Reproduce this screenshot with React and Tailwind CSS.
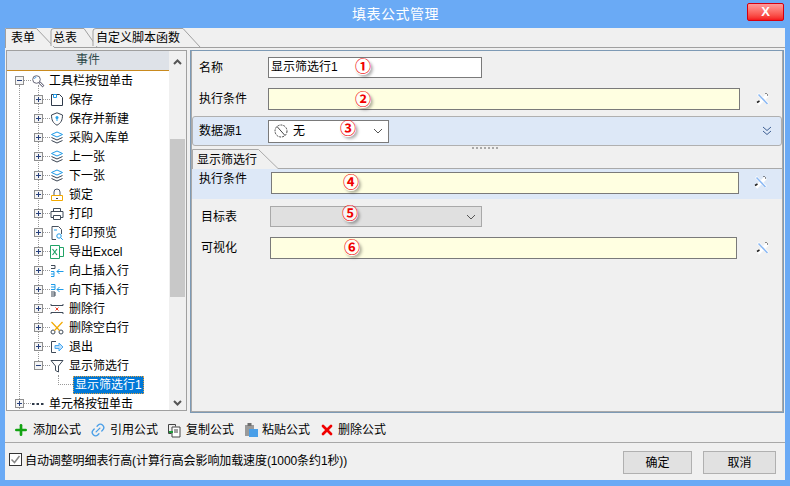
import { Plus, Link2, X } from 'lucide-react'

const FONT = "font-['Liberation_Sans','Noto_Sans_CJK_SC',sans-serif]"

const Stroke = ({ children, size = 14 }) => (
  <svg width={size} height={size} viewBox="0 0 14 14" fill="none" className="shrink-0">{children}</svg>
)

const icons = {
  search: (
    <Stroke>
      <circle cx="5.5" cy="5.5" r="3.8" stroke="#667" fill="#fff" />
      <path d="M3.5 5a2 2 0 0 1 2-2" stroke="#5aa7e8" />
      <path d="M8.500 8.500 12.500 12.500" stroke="#778" strokeWidth="2.500" />
      <path d="M9 9 12 12" stroke="#fff" />
    </Stroke>
  ),
  save: (
    <Stroke>
      <path d="M1.5 1.5h8l3 3v8h-11z" stroke="#2f3a4a" fill="#fff" />
      <path d="M3.5 1.5h3v3h-3z" stroke="#1e9be8" />
    </Stroke>
  ),
  shield: (
    <Stroke>
      <path d="M7 .8 12.5 3c0 5-1.5 8.2-5.5 10.2C3 11.200 1.500 8 1.500 3z" stroke="#3a4452" fill="#fff" />
      <circle cx="7" cy="5.500" r="1.500" fill="#28a3ea" />
      <path d="M7 6v3" stroke="#28a3ea" />
    </Stroke>
  ),
  layers: (
    <Stroke>
      <path d="M7 1 12.500 3.500 7 6 1.500 3.500z" stroke="#1e9be8" />
      <path d="M1.500 6.500 7 9l5.500-2.500" stroke="#3a4452" />
      <path d="M1.500 9.500 7 12l5.500-2.500" stroke="#3a4452" />
    </Stroke>
  ),
  lock: (
    <Stroke>
      <path d="M4 7V4a3 3 0 0 1 6 0v3" stroke="#4a5565" />
      <path d="M1.500 7.500h11v5h-11z" stroke="#f2a900" fill="#fff" />
      <path d="M6 10.500h2" stroke="#445" />
    </Stroke>
  ),
  print: (
    <Stroke>
      <path d="M3.500 4V1.500h7V4" stroke="#3f4a58" />
      <path d="M3 10.500H1V4.500h12v6h-2" stroke="#3f4a58" />
      <path d="M3.500 8.500h7v4h-7z" stroke="#3f4a58" fill="#fff" />
    </Stroke>
  ),
  preview: (
    <Stroke>
      <path d="M2 .500h6.500l3 3V8M6 13.500H2V.500" stroke="#46505e" />
      <circle cx="9" cy="10" r="2.200" stroke="#1e9be8" />
      <path d="M10.800 11.800 12.800 13.800" stroke="#1e9be8" />
      <path d="M4 4h3" stroke="#1e9be8" />
    </Stroke>
  ),
  excel: (
    <Stroke>
      <path d="M.500.500h9v13h-9z" stroke="#21a366" fill="#fff" />
      <path d="M9.500 2.500h4v9h-4" stroke="#21a366" />
      <path d="M2.500 4 7 10M7 4l-4.500 6" stroke="#21a366" strokeWidth="1.200" />
    </Stroke>
  ),
  rowUp: (
    <Stroke>
      <path d="M1 1.500h4v3M1 4.500h4" stroke="#3f4a58" />
      <path d="M1 7.500h3v5H1M1 10h3" stroke="#1e9be8" />
      <path d="M13.500 7.500H7M9.500 5 7 7.500 9.500 10" stroke="#1e9be8" />
    </Stroke>
  ),
  rowDown: (
    <Stroke>
      <path d="M1 1.500h4v5H1M1 4h4" stroke="#1e9be8" />
      <path d="M1 9h4v4H1M1 11h4" stroke="#3f4a58" />
      <path d="M13.500 6.500H7M9.500 4 7 6.500 9.500 9" stroke="#1e9be8" />
    </Stroke>
  ),
  delRow: (
    <Stroke>
      <path d="M1 2v1.500h12V2M1 12v-1.500h12V12" stroke="#3f4a58" />
      <path d="M5.500 5.500 8.500 8.500M8.500 5.500 5.500 8.500" stroke="#e8402a" />
    </Stroke>
  ),
  scissors: (
    <Stroke>
      <circle cx="3" cy="11" r="2" stroke="#3f4a58" />
      <circle cx="11" cy="11" r="2" stroke="#3f4a58" />
      <path d="M1.500 1 9.500 9.500M12.500 1 4.500 9.500" stroke="#f2a900" strokeWidth="1.200" />
    </Stroke>
  ),
  exit: (
    <Stroke>
      <path d="M6 1.500H1.500v11H6" stroke="#3f4a58" />
      <path d="M5 5.500h4V3l4 4-4 4V8.500H5z" stroke="#4aa8f0" fill="#bfe0fb" />
    </Stroke>
  ),
  funnel: (
    <Stroke>
      <path d="M1 1.500h12L8.500 7v6l-3-1.500V7z" stroke="#3f4a58" fill="#fff" />
    </Stroke>
  ),
  dots: (
    <Stroke>
      <path d="M1 7h2.500M5.500 7H8M10 7h2.500" stroke="#2f3a4a" strokeWidth="2" />
    </Stroke>
  ),
}

const tree = [
  { label: '保存', icon: 'save' },
  { label: '保存并新建', icon: 'shield' },
  { label: '采购入库单', icon: 'layers' },
  { label: '上一张', icon: 'layers' },
  { label: '下一张', icon: 'layers' },
  { label: '锁定', icon: 'lock' },
  { label: '打印', icon: 'print' },
  { label: '打印预览', icon: 'preview' },
  { label: '导出Excel', icon: 'excel' },
  { label: '向上插入行', icon: 'rowUp' },
  { label: '向下插入行', icon: 'rowDown' },
  { label: '删除行', icon: 'delRow' },
  { label: '删除空白行', icon: 'scissors' },
  { label: '退出', icon: 'exit' },
]

function Expander({ open }) {
  return (
    <span className="relative z-10 w-[9px] h-[9px] shrink-0 border border-[#8f8f8f] bg-[#f4f4f4] flex items-center justify-center">
      <span className="absolute w-[5px] h-px bg-[#27407c]" />
      {!open && <span className="absolute w-px h-[5px] bg-[#27407c]" />}
    </span>
  )
}

function Row({ level, open, icon, children }) {
  return (
    <div className={`flex items-center h-[19px] ${level === 0 ? 'pl-[8px]' : 'pl-[27px]'}`}>
      <Expander open={open} />
      <span className="w-[7px] border-t border-dotted border-[#999]" />
      <span className="w-[14px] flex justify-center">{icons[icon]}</span>
      <span className={`${level === 0 ? 'ml-[4px]' : 'ml-[5px]'} text-[12px] text-black whitespace-nowrap`}>{children}</span>
    </div>
  )
}

function Tab({ label, className, path }) {
  return (
    <div className={`relative ${className} pl-[6px] text-[12px] leading-[21px] text-black -mr-[8px]`}>
      <svg className="absolute inset-0 w-full h-full" fill="none">
        <path d={path} stroke="#a0a0a0" fill="#f0f0f0" />
      </svg>
      <span className="relative">{label}</span>
    </div>
  )
}

function Tools() {
  return (
    <svg width="16" height="16" viewBox="0 0 16 16" fill="none" className="shrink-0">
      <path d="M3 13.500 12.500 4" stroke="#fff" strokeWidth="3.500" />
      <path d="M3 3 13 13" stroke="#fff" strokeWidth="2.500" />
      <path d="M3.500 3.500 12.500 13" stroke="#8ab8f4" strokeWidth="1.500" />
      <path d="M2 11.500 4.500 10" stroke="#222" strokeWidth="1.500" />
      <path d="M10.500 2.500h1M12.500 3.500v1" stroke="#222" />
    </svg>
  )
}

function Chevron() {
  return (
    <svg width="10" height="6" viewBox="0 0 10 6" fill="none" className="shrink-0">
      <path d="M1 1 5 5l4-4" stroke="#555" />
    </svg>
  )
}

function Mark({ className, children }) {
  return (
    <span className={`absolute ${className} w-[16px] h-[16px] flex items-center justify-center text-[16px] font-bold leading-none text-[#f00000] bg-[#fff]/70 rounded-full [box-shadow:2px_2px_3px_rgba(0,0,0,0.3)]`}>
      {children}
    </span>
  )
}

function Field({ className }) {
  return <div className={`h-[22px] border border-[#7a7a7a] bg-[#ffffe1] ${className}`} />
}

export default function App() {
  return (
    <div className={`${FONT} w-[790px] h-[486px] bg-[#6aaaf5] flex flex-col overflow-hidden`}>
      <div className="h-[28px] shrink-0 flex items-center justify-center relative text-white text-[14px] tracking-[0.5px]">
        <span className="pl-[1px]">填表公式管理</span>
        <div className="absolute left-[747px] top-[3px] w-[37px] h-[18px] border border-[#d4000f] rounded-[2px] bg-gradient-to-b from-[#ff9a9a] to-[#f5121a] text-center text-[13px] leading-[16px] font-bold text-white tracking-normal">
          X
        </div>
      </div>

      <div className="ml-[5px] mr-[5px] h-[452px] bg-[#f0f0f0] flex flex-col">
        {/* tab strip */}
        <div className="h-[20px] shrink-0 flex border-b border-[#a0a0a0] relative">
          <Tab label="表单" className="w-[50px] h-[20px]" path="M.5 20V.5h31L50 20" />
          <Tab label="总表" className="w-[51px] h-[19px]" path="M4 18V3Q4 .5 7 .5h30L50 19" />
          <Tab label="自定义脚本函数" className="w-[111px] h-[19px]" path="M3 18V3Q3 .5 6 .5h87L110 19" />
        </div>

        <div className="h-[364px] shrink-0 flex px-[1px] pt-[2px] gap-[3px]">
          {/* event tree */}
          <div className="w-[181px] h-[361px] border border-[#a0a0a0] bg-white flex overflow-hidden">
            <div className="flex-1 min-w-0 flex flex-col">
              <div className="h-[20px] shrink-0 bg-[#dee2e8] border-b border-[#c98a1e] text-center text-[12px] leading-[19px] text-[#2f4a4a]">事件</div>
              <div className="relative">
                <span className="absolute left-[12px] top-[14px] h-[330px] border-l border-dotted border-[#999]" />
                <span className="absolute left-[31px] top-[14px] h-[280px] border-l border-dotted border-[#999]" />
                <Row level={0} open icon="search">工具栏按钮单击</Row>
                {tree.map(item => (
                  <Row key={item.label} level={1} icon={item.icon}>{item.label}</Row>
                ))}
                <Row level={1} open icon="funnel">显示筛选行</Row>
                <div className="flex items-center h-[19px] pl-[51px]">
                  <span className="w-[15px] h-[10px] -mt-[10px] border-l border-b border-dotted border-[#999]" />
                  <span className="h-[18px] px-[1px] bg-[#0078d7] border border-dotted border-[#e0a040] text-white text-[12px] leading-[16px] whitespace-nowrap">显示筛选行1</span>
                </div>
                <Row level={0} icon="dots">单元格按钮单击</Row>
              </div>
            </div>
            <div className="w-[17px] shrink-0 bg-[#f0f0f0] flex flex-col items-center">
              <svg width="9" height="6" viewBox="0 0 9 6" className="mt-[8px] shrink-0" fill="none">
                <path d="M1 5 4.500 1.500 8 5" stroke="#555" strokeWidth="2" />
              </svg>
              <div className="w-[15px] h-[158px] mt-[74px] bg-[#c8c8c8]" />
              <svg width="9" height="6" viewBox="0 0 9 6" className="mt-auto mb-[4px] shrink-0" fill="none">
                <path d="M1 1 4.500 4.500 8 1" stroke="#555" strokeWidth="2" />
              </svg>
            </div>
          </div>

          {/* formula form */}
          <div className="relative w-[594px] h-[363px] border border-[#7d9ab5]">
            <div className="h-full border border-[#a9a9a9] border-t-0 flex flex-col">
              <div className="flex items-center h-[21px] mt-[6px] pl-[7px]">
                <span className="w-[69px] text-[12px] text-black">名称</span>
                <div className="w-[214px] h-[21px] border border-[#7a7a7a] bg-white text-[12px] leading-[19px] pl-[2px] text-black">显示筛选行1</div>
              </div>
              <div className="flex items-center h-[22px] mt-[10px] pl-[7px]">
                <span className="w-[69px] text-[12px] text-black">执行条件</span>
                <Field className="w-[472px]" />
                <span className="ml-[15px]"><Tools /></span>
              </div>
              <div className="flex items-center h-[30px] mt-[6px] pl-[6px] bg-[#dde8f7] border border-[#b0b0b0] rounded-[3px]">
                <span className="w-[69px] text-[12px] text-black">数据源1</span>
                <div className="w-[121px] h-[23px] border border-[#7a7a7a] bg-white flex items-center pl-[5px] pr-[5px] text-[12px] text-black">
                  <svg width="14" height="14" viewBox="0 0 14 14" fill="none" className="shrink-0">
                    <circle cx="7" cy="7" r="6" stroke="#444" strokeDasharray="2 1" />
                    <path d="M3 2.500 11 11.500" stroke="#444" />
                  </svg>
                  <span className="ml-[5px]">无</span>
                  <span className="ml-auto"><Chevron /></span>
                </div>
                <svg width="10" height="10" viewBox="0 0 10 10" fill="none" className="ml-auto mr-[9px] shrink-0">
                  <path d="M1 1 5 4.500 9 1M1 5 5 8.500 9 5" stroke="#3e5f93" />
                </svg>
              </div>
              <div className="h-[3px] flex justify-center items-center pr-[4px]">
                <span className="w-[26px] border-t-2 border-dotted border-[#a8a8a8]" />
              </div>
              <div className="flex-1 flex flex-col">
                <div className="h-[20px] shrink-0 relative text-[12px] leading-[22px] text-black pl-[5px]">
                  <svg className="absolute inset-0 w-full h-full" fill="none">
                    <path d="M.5 20V.5h66L86 19.500H590" stroke="#a9a9a9" />
                  </svg>
                  <span className="relative">显示筛选行</span>
                </div>
                <div className="h-[30px] shrink-0 bg-[#dde8f7] flex pl-[7px]">
                  <span className="w-[72px] text-[12px] leading-[20px] text-black">执行条件</span>
                  <Field className="w-[468px] mt-[3px]" />
                  <span className="ml-[14px] mt-[5px]"><Tools /></span>
                </div>
                <div className="flex items-center h-[21px] mt-[7px] pl-[9px]">
                  <span className="w-[69px] text-[12px] text-black">目标表</span>
                  <div className="w-[212px] h-[21px] border border-[#a9a9a9] bg-[#e0e0e0] flex items-center justify-end pr-[5px]">
                    <Chevron />
                  </div>
                </div>
                <div className="flex items-center h-[22px] mt-[10px] pl-[9px]">
                  <span className="w-[69px] text-[12px] text-black">可视化</span>
                  <Field className="w-[467px]" />
                  <span className="ml-[18px]"><Tools /></span>
                </div>
              </div>
            </div>
            <Mark className="left-[164px] top-[8px]">①</Mark>
            <Mark className="left-[164px] top-[41px]">②</Mark>
            <Mark className="left-[149px] top-[70px]">③</Mark>
            <Mark className="left-[152px] top-[124px]">④</Mark>
            <Mark className="left-[151px] top-[155px]">⑤</Mark>
            <Mark className="left-[153px] top-[189px]">⑥</Mark>
          </div>
        </div>

        {/* formula actions */}
        <div className="h-[31px] pt-[6px] shrink-0 flex items-center pl-[8px] gap-[9px] border-b border-[#a8a8a8] text-[12px] text-black">
          <span className="flex items-center gap-[4px]"><Plus size={16} strokeWidth={4} color="#12a312" />添加公式</span>
          <span className="flex items-center gap-[4px]"><Link2 size={16} color="#4a9fe8" className="-rotate-45" />引用公式</span>
          <span className="flex items-center gap-[4px]">
            <svg width="15" height="15" viewBox="0 0 15 15" fill="none" className="shrink-0">
              <path d="M1.500 1.500h7v2M1.500 1.500v9h3" stroke="#444" />
              <path d="M5 4h8v10H5z" stroke="#444" fill="#fff" />
              <path d="M7 7h4M7 9h4" stroke="#444" />
              <path d="M2 9h4" stroke="#1e9b3a" strokeWidth="2" />
            </svg>
            复制公式
          </span>
          <span className="flex items-center gap-[3px]">
            <svg width="16" height="16" viewBox="0 0 16 16" className="shrink-0">
              <path d="M2 3h9v11H2z" fill="#9a9a9a" />
              <path d="M4.500 1h4v3h-4z" fill="#6f6f6f" />
              <path d="M6 7h9v8H6z" fill="#4a9fe8" />
            </svg>
            粘贴公式
          </span>
          <span className="flex items-center gap-[3px]"><X size={16} strokeWidth={4} color="#f00000" />删除公式</span>
        </div>

        {/* footer */}
        <div className="flex-1 flex items-start pl-[4px] pr-[9px] text-[12px] text-black">
          <span className="mt-[10px] w-[13px] h-[13px] border border-[#333] bg-white flex items-center justify-center shrink-0">
            <svg width="11" height="11" viewBox="0 0 11 11" fill="none">
              <path d="M1.500 5.500 4.500 8.500 9.500 2" stroke="#888" strokeWidth="1.500" />
            </svg>
          </span>
          <span className="ml-[3px] mt-[9px] whitespace-nowrap tracking-[-0.1px]">自动调整明细表行高(计算行高会影响加载速度(1000条约1秒))</span>
          <button className="ml-auto mt-[8px] w-[69px] h-[23px] border border-[#b0b0b0] bg-[#e1e1e1] text-[12px]">确定</button>
          <button className="ml-[11px] mt-[8px] w-[73px] h-[23px] border border-[#b0b0b0] bg-[#e1e1e1] text-[12px]">取消</button>
        </div>
      </div>
    </div>
  )
}
